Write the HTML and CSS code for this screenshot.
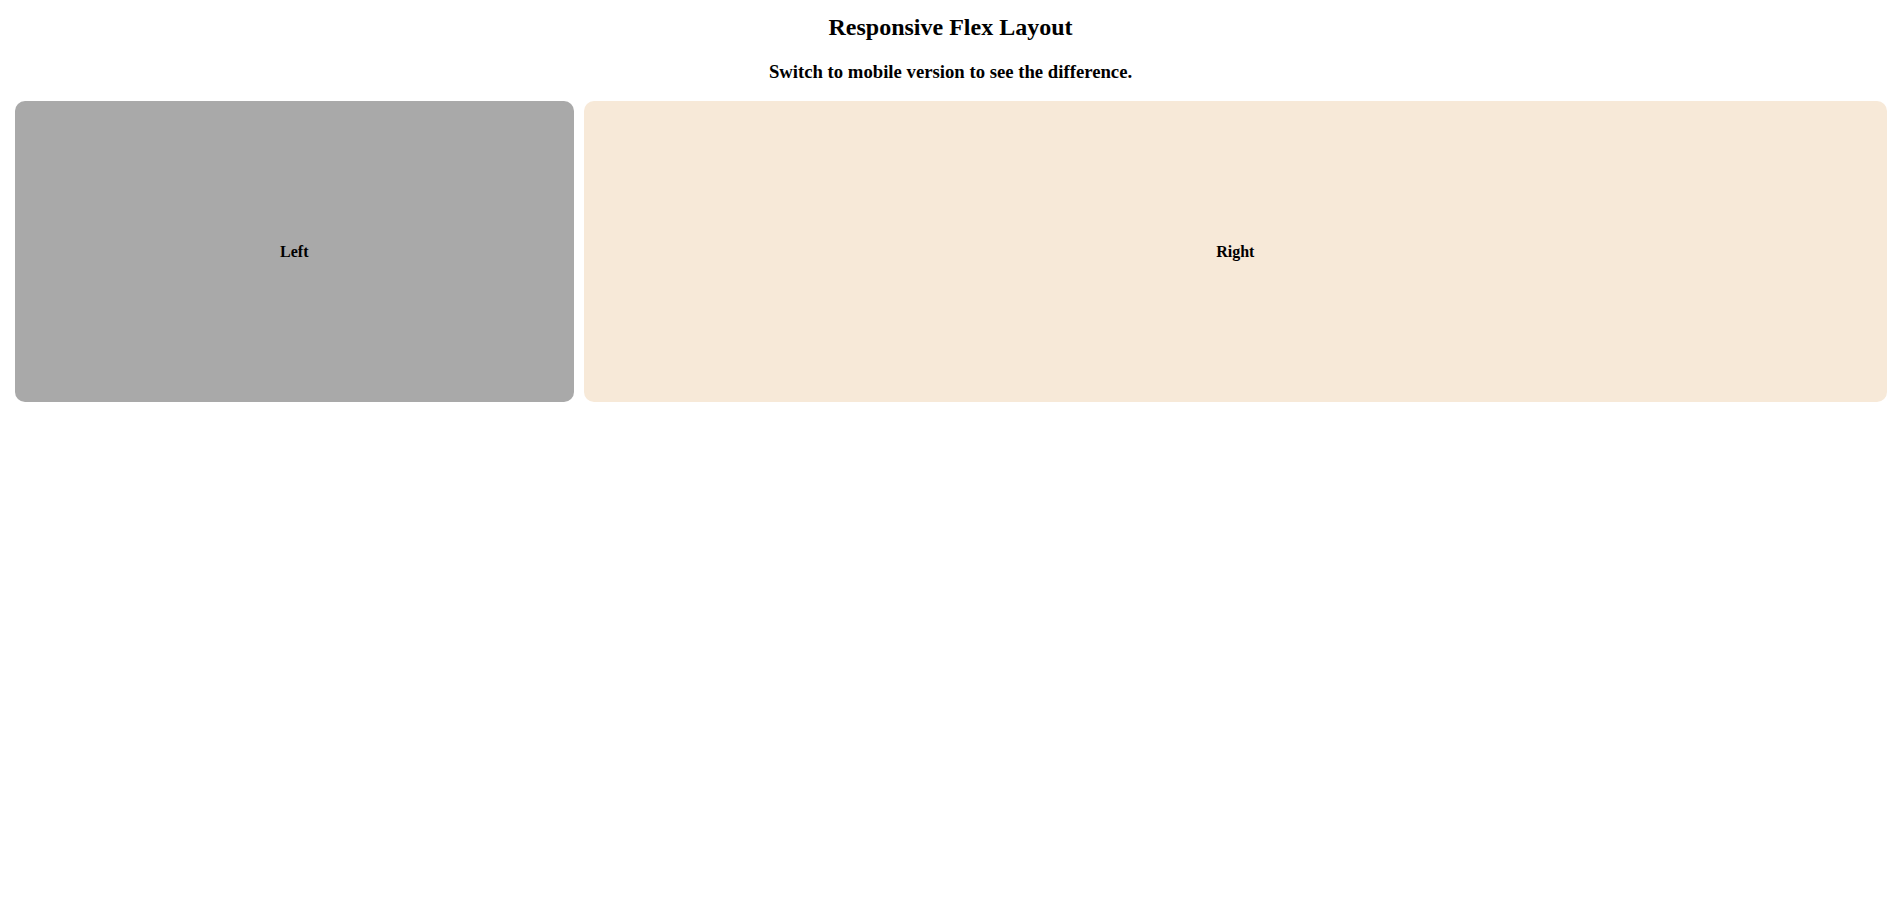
FILE: index.html
```html
<!DOCTYPE html>
<html>
<head>
<meta charset="utf-8">
<title>Responsive Flex Layout</title>
<link rel="stylesheet" href="styles.css">
</head>
<body>
<h2 class="title">Responsive Flex Layout</h2>
<h3 class="subtitle">Switch to mobile version to see the difference.</h3>
<div class="row">
  <div class="box left">Left</div>
  <div class="box right">Right</div>
</div>
</body>
</html>
```

FILE: styles.css
```css
html, body {
  background: #fff;
}
body {
  margin: 8px;
  font-family: "Liberation Serif", "Times New Roman", serif;
  color: #000;
}
.title {
  font-size: 24px;
  text-align: center;
  margin: 6px 0 0;
  line-height: 27px;
}
.subtitle {
  font-size: 18.72px;
  text-align: center;
  margin: 20px 0 18px;
}
.row {
  display: flex;
  gap: 10px;
  padding: 0 6px 0 7px;
}
.box {
  height: 301px;
  border-radius: 10px;
  display: flex;
  align-items: center;
  justify-content: center;
  font-weight: bold;
  font-size: 16px;
}
.left {
  flex: 3 1 0;
  background: #a9a9a9;
}
.right {
  flex: 7 1 0;
  background: #f7e9d8;
}
```
